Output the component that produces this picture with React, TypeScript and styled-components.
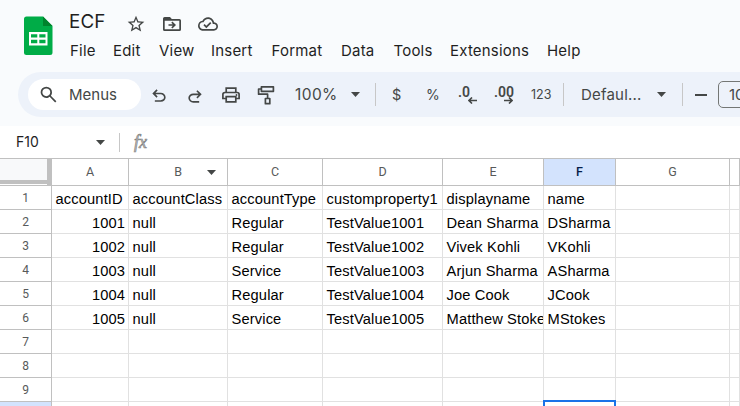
import React from 'react';
import styled, { createGlobalStyle } from 'styled-components';

const GlobalStyle = createGlobalStyle`
  * { box-sizing: border-box; }
  body { margin: 0; background: #fff; overflow: hidden; }
`;

const Page = styled.div`
  width: 740px;
  height: 406px;
  overflow: hidden;
  display: flex;
  flex-direction: column;
  background: #fff;
  font-family: Inter, sans-serif;
  font-weight: 375;
  color: #1f1f1f;
`;

const Top = styled.header`
  flex: none;
  height: 126px;
  background: #f9fbfd;
  display: flex;
  flex-direction: column;
`;

const TitleArea = styled.div`
  height: 72px;
  display: flex;
  padding-left: 24px;
`;

const Logo = styled.svg`
  flex: none;
  width: 29px;
  height: 39px;
  margin: 16px 17px 0 0;
`;

const TitleColumn = styled.div`
  display: flex;
  flex-direction: column;
`;

const TitleRow = styled.div`
  display: flex;
  align-items: center;
  height: 41px;
  padding-top: 6px;
`;

const DocTitle = styled.span`
  width: 57px;
  margin: -3px 0 0 -1px;
  font-size: 18.8px;
  line-height: 24px;
  letter-spacing: 0.1px;
`;

const TitleIcons = styled.div`
  display: flex;
  gap: 16px;
`;

const Icon = styled.svg<{ $size?: number }>`
  flex: none;
  display: block;
  width: ${(p) => p.$size ?? 20}px;
  height: ${(p) => p.$size ?? 20}px;
  fill: #444746;
`;

const MenuBar = styled.nav`
  display: flex;
  height: 20px;
`;

const MenuItem = styled.span<{ $width: number }>`
  width: ${(p) => p.$width}px;
  font-size: 15px;
  line-height: 20px;
  letter-spacing: 0.2px;
  white-space: nowrap;
`;

const Toolbar = styled.div`
  flex: none;
  height: 45px;
  margin-left: 18px;
  padding-left: 10px;
  border-radius: 23px 0 0 23px;
  background: #edf2fa;
  display: flex;
  align-items: center;
  overflow: hidden;
  color: #444746;
`;

const SearchPill = styled.div`
  flex: none;
  width: 113px;
  height: 31px;
  border-radius: 16px;
  background: #fff;
  display: flex;
  align-items: center;
  padding-left: 10px;
  gap: 10px;
`;

const Slot = styled.div<{ $width: number; $drop?: number }>`
  flex: none;
  width: ${(p) => p.$width}px;
  padding-top: ${(p) => p.$drop ?? 0}px;
  display: flex;
  justify-content: center;
`;

const Label = styled.span<{ $width?: number; $size?: number; $track?: number }>`
  flex: none;
  width: ${(p) => (p.$width ? `${p.$width}px` : 'auto')};
  font-size: ${(p) => p.$size ?? 15}px;
  letter-spacing: ${(p) => p.$track ?? 0}px;
  line-height: 20px;
  white-space: nowrap;
`;

const Divider = styled.span<{ $after: number; $height?: number }>`
  flex: none;
  width: 1px;
  height: ${(p) => p.$height ?? 23}px;
  margin-right: ${(p) => p.$after}px;
  background: #c7c7c7;
`;

const Caret = styled.svg<{ $after?: number }>`
  flex: none;
  width: 9px;
  height: 5px;
  margin-right: ${(p) => p.$after ?? 0}px;
  fill: #444746;
`;

const Decimal = styled.div<{ $width: number }>`
  flex: none;
  width: ${(p) => p.$width}px;
  height: 18px;
  display: flex;
  flex-direction: column;
  font: 600 14px/12px Roboto, sans-serif;
`;

const DecimalArrow = styled.svg`
  width: 9px;
  height: 7px;
  margin: -1px 0 0 10px;
  fill: none;
  stroke: #444746;
  stroke-width: 1.6;
`;

const Minus = styled.span`
  flex: none;
  width: 12px;
  height: 2px;
  margin-right: 11px;
  background: #444746;
`;

const SizeBox = styled.div`
  flex: none;
  width: 44px;
  height: 27px;
  border: 1px solid #747775;
  border-radius: 5px;
  padding-left: 10px;
  font-size: 15px;
  line-height: 25px;
`;

const FormulaBar = styled.div`
  flex: none;
  height: 32px;
  display: flex;
  align-items: center;
  padding-left: 16px;
`;

const CellName = styled.span`
  width: 80px;
  font-size: 14px;
  line-height: 18px;
  letter-spacing: 0;
  margin-top: -1px;
`;

const Fx = styled.span`
  font: italic 400 18px/20px "Liberation Serif", serif;
  margin-left: -1px;
  color: #c4c4c4;
  -webkit-text-stroke: 0.7px #858585;
`;

const Sheet = styled.div`
  flex: none;
  border-top: 1px solid #c0c0c0;
`;

const Row = styled.div<{ $head?: boolean }>`
  display: grid;
  grid-template-columns: 52px 77px 99px 95px 120px 101px 72px 114px 10px;
  grid-template-rows: ${(p) => (p.$head ? 27 : 24)}px;
`;

const Corner = styled.div`
  background: #f8f9fa;
  border-right: 5px solid #c0c0c0;
  box-shadow: inset 0 -1px #c0c0c0, inset 0 -2px #fff, inset 0 -6px #c0c0c0;
`;

const ColumnHead = styled.div<{ $active?: boolean }>`
  display: flex;
  align-items: center;
  justify-content: center;
  border-right: 1px solid #c0c0c0;
  border-bottom: 1px solid #c0c0c0;
  background: ${(p) => (p.$active ? '#d3e3fd' : '#fff')};
  font: ${(p) => (p.$active ? 500 : 400)} 12.5px/26px Roboto, sans-serif;
  color: ${(p) => (p.$active ? '#041e49' : '#575a5a')};
`;

const FilterHead = styled(ColumnHead)`
  justify-content: flex-end;
  padding-right: 11px;
  gap: 25px;
`;

const RowHead = styled.div<{ $active?: boolean }>`
  border-right: 1px solid #c0c0c0;
  border-bottom: 1px solid #c0c0c0;
  background: ${(p) => (p.$active ? '#d3e3fd' : '#fff')};
  padding-top: 1px;
  font: 12px/22px Roboto, sans-serif;
  color: #575a5a;
  text-align: center;
`;

const Cell = styled.div<{ $number?: boolean }>`
  position: relative;
  min-width: 0;
  overflow: hidden;
  white-space: nowrap;
  border-right: 1px solid #e1e1e1;
  border-bottom: 1px solid #e1e1e1;
  padding: 3px ${(p) => (p.$number ? 3 : 0)}px 0 3.6px;
  font: 14.67px/21px "Liberation Sans", Arial, sans-serif;
  letter-spacing: 0.13px;
  color: #000;
  text-align: ${(p) => (p.$number ? 'right' : 'left')};
`;

const SelectedCell = styled(Cell)`
  overflow: visible;
  border-right-color: transparent;

  &::after {
    content: '';
    position: absolute;
    inset: -2px -1px -1px -1px;
    border: 2px solid #1a73e8;
  }
`;

const MENUS: [string, number][] = [
  ['File', 43],
  ['Edit', 46],
  ['View', 52],
  ['Insert', 60.5],
  ['Format', 69.5],
  ['Data', 52.5],
  ['Tools', 56.5],
  ['Extensions', 97],
  ['Help', 40],
];

const ROWS: string[][] = [
  ['accountID', 'accountClass', 'accountType', 'customproperty1', 'displayname', 'name'],
  ['1001', 'null', 'Regular', 'TestValue1001', 'Dean Sharma', 'DSharma'],
  ['1002', 'null', 'Regular', 'TestValue1002', 'Vivek Kohli', 'VKohli'],
  ['1003', 'null', 'Service', 'TestValue1003', 'Arjun Sharma', 'ASharma'],
  ['1004', 'null', 'Regular', 'TestValue1004', 'Joe Cook', 'JCook'],
  ['1005', 'null', 'Service', 'TestValue1005', 'Matthew Stokes', 'MStokes'],
  [],
  [],
  [],
  [],
];

const COLUMNS = ['A', 'B', 'C', 'D', 'E', 'F', 'G', ''];

const Down = ({ after }: { after?: number }) => (
  <Caret $after={after} viewBox="0 0 9 5">
    <path d="M0 0h9L4.500 5z" />
  </Caret>
);

export default function App() {
  return (
    <Page>
      <GlobalStyle />
      <Top>
        <TitleArea>
          <Logo viewBox="0 0 29 39">
            <path d="M2.500.5H19l9.500 9.500v26.500a2.500 2.500 0 0 1-2.500 2.500H2.500A2.500 2.500 0 0 1 0 36.500V3A2.500 2.500 0 0 1 2.500.5z" fill="#00ac47" />
            <path d="M19 .5l9.500 9.500H19z" fill="#00832d" />
            <path d="M5 16h18.500v13.500H5zM7 18.200v3.400h6.300v-3.400zm8.300 0v3.400h6.200v-3.400zM7 23.800v3.500h6.300v-3.500zm8.300 0v3.500h6.200v-3.500z" fill="#fff" fillRule="evenodd" />
          </Logo>
          <TitleColumn>
            <TitleRow>
              <DocTitle>ECF</DocTitle>
              <TitleIcons>
                <Icon viewBox="0 0 24 24">
                  <path d="M22 9.240l-7.190-.62L12 2 9.190 8.630 2 9.240l5.460 4.730L5.820 21 12 17.270 18.180 21l-1.630-7.030L22 9.240zM12 15.400l-3.760 2.270 1-4.280-3.320-2.880 4.380-.38L12 6.100l1.710 4.040 4.380.38-3.320 2.880 1 4.280L12 15.400z" />
                </Icon>
                <Icon viewBox="0 0 20 20">
                  <path fillRule="evenodd" d="M2.600 3H8l1.800 2h7.600A1.600 1.600 0 0 1 19 6.600v8.800a1.600 1.600 0 0 1-1.600 1.600H2.600A1.600 1.600 0 0 1 1 15.400V4.600A1.600 1.600 0 0 1 2.600 3zm.1 3.700v8.600h14.600V6.700z" />
                  <path d="M6.500 10.200h4.300L9.300 8.700l1.100-1.100L14 11l-3.600 3.500-1.100-1.100 1.500-1.600H6.500z" />
                </Icon>
                <Icon viewBox="0 0 24 24">
                  <path d="M19.350 10.040C18.670 6.590 15.640 4 12 4 9.110 4 6.610 5.640 5.360 8.040 2.350 8.360 0 10.910 0 14c0 3.310 2.690 6 6 6h13c2.760 0 5-2.240 5-5 0-2.640-2.050-4.780-4.650-4.960zM19 18H6c-2.210 0-4-1.790-4-4 0-2.050 1.530-3.760 3.560-3.970l1.070-.11.5-.95C8.080 7.140 9.940 6 12 6c2.620 0 4.880 1.860 5.390 4.430l.3 1.500 1.530.11c1.560.1 2.780 1.410 2.780 2.960 0 1.650-1.350 3-3 3zm-9-3.820l-2.090-2.090L6.500 13.500 10 17l6.010-6.010-1.410-1.410z" />
                </Icon>
              </TitleIcons>
            </TitleRow>
            <MenuBar>
              {MENUS.map(([name, width]) => (
                <MenuItem key={name} $width={width}>{name}</MenuItem>
              ))}
            </MenuBar>
          </TitleColumn>
        </TitleArea>
        <Toolbar>
          <SearchPill>
            <Icon $size={21} viewBox="0 -960 960 960">
              <path d="M784-120 532-372q-30 24-69 38t-83 14q-109 0-184.500-75.500T120-580q0-109 75.500-184.500T380-840q109 0 184.500 75.500T640-580q0 44-14 83t-38 69l252 252-56 56ZM380-400q75 0 127.500-52.500T560-580q0-75-52.500-127.500T380-760q-75 0-127.500 52.500T200-580q0 75 52.500 127.500T380-400Z" />
            </Icon>
            <Label>Menus</Label>
          </SearchPill>
          <Slot $width={36} $drop={3}>
            <Icon viewBox="0 -960 960 960">
              <path d="M280-200v-80h284q63 0 109.500-40T720-420q0-60-46.500-100T564-560H312l104 104-56 56-200-200 200-200 56 56-104 104h252q97 0 163.500 63T800-420q0 94-66.500 157T564-200H280Z" />
            </Icon>
          </Slot>
          <Slot $width={35} $drop={3}>
            <Icon viewBox="0 -960 960 960">
              <path d="M396-200q-97 0-163.500-63T160-420q0-94 72.500-157T396-640h252L544-744l56-56 200 200-200 200-56-56 104-104H396q-63 0-109.500 40T240-420q0 60 46.500 100T396-280h284v80H396Z" transform="translate(0 40)" />
            </Icon>
          </Slot>
          <Slot $width={38}>
            <Icon viewBox="0 0 20 20">
              <path d="M5.200 7.500V3.100h9.600v4.400M5 13.500H1.900V9.500a2 2 0 0 1 2-2h12.200a2 2 0 0 1 2 2v4H15M5.200 11.700h9.600v5.200H5.200z" fill="none" stroke="#444746" strokeWidth="1.700" />
              <circle cx="15.500" cy="10" r=".9" />
            </Icon>
          </Slot>
          <Slot $width={32}>
            <Icon viewBox="0 0 20 20">
              <path d="M5.400 1.800h12v4.500h-12zM5.400 4H2.600v5.200h9v4M9.400 13.500h4.400v5.200H9.400z" fill="none" stroke="#444746" strokeWidth="1.700" strokeLinejoin="round" />
            </Icon>
          </Slot>
          <Slot $width={13} />
          <Label $width={56} $size={15.5} $track={0.4}>100%</Label>
          <Down after={15} />
          <Divider $after={16} />
          <Label $width={34} $size={14.5}>$</Label>
          <Label $width={32} $size={14}>%</Label>
          <Decimal $width={36}>
            .0
            <DecimalArrow viewBox="0 0 9 7"><path d="M9 3.500H1M4 .5l-3 3 3 3" /></DecimalArrow>
          </Decimal>
          <Decimal $width={37}>
            .00
            <DecimalArrow viewBox="0 0 9 7"><path d="M0 3.500h8M5 .5l3 3-3 3" /></DecimalArrow>
          </Decimal>
          <Label $width={32} $size={12.5}>123</Label>
          <Divider $after={17} />
          <Label $width={76} $track={0.2}>Defaul...</Label>
          <Down after={16} />
          <Divider $after={12} />
          <Minus />
          <SizeBox>10</SizeBox>
        </Toolbar>
      </Top>
      <FormulaBar>
        <CellName>F10</CellName>
        <Down after={14} />
        <Divider $after={15} $height={19} />
        <Fx>fx</Fx>
      </FormulaBar>
      <Sheet>
        <Row $head>
          <Corner />
          {COLUMNS.map((name) =>
            name === 'B' ? (
              <FilterHead key={name}>
                {name}
                <Down />
              </FilterHead>
            ) : (
              <ColumnHead key={name} $active={name === 'F'}>{name}</ColumnHead>
            ),
          )}
        </Row>
        {ROWS.map((values, r) => (
          <Row key={r}>
            <RowHead $active={r === 9}>{r < 9 ? r + 1 : ''}</RowHead>
            {COLUMNS.map((name, c) =>
              r === 9 && name === 'F' ? (
                <SelectedCell key={c} />
              ) : (
                <Cell key={c} $number={r > 0 && c === 0}>{values[c]}</Cell>
              ),
            )}
          </Row>
        ))}
      </Sheet>
    </Page>
  );
}
